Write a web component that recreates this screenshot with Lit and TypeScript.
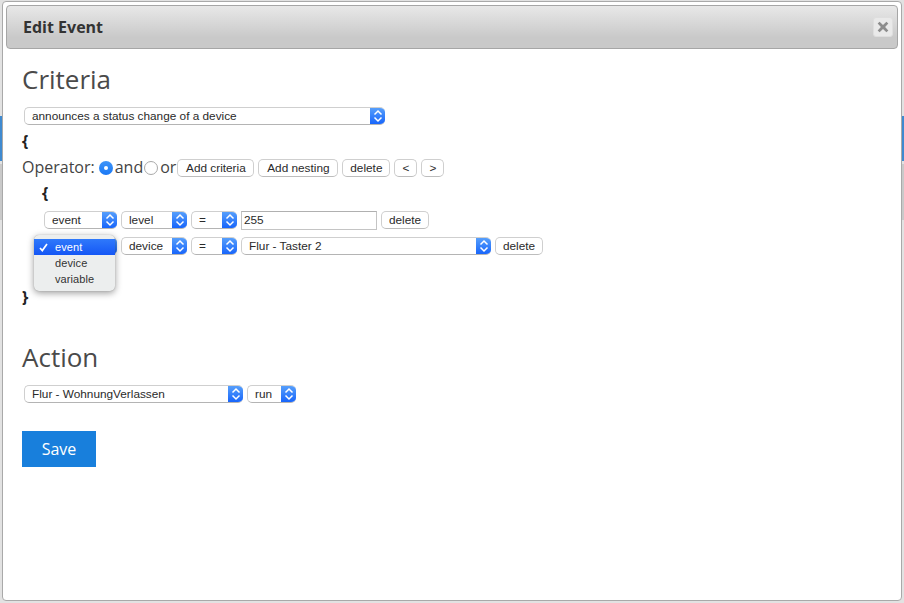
import { LitElement, html, css, svg } from "lit";
import { customElement } from "lit/decorators.js";

const chev = svg`<svg class="chev" width="10" height="14" viewBox="0 0 10 14" fill="none" stroke="#fff" stroke-width="1.5"><path d="M1.5 5.5 5 2 8.5 5.5"/><path d="M1.5 8.5 5 12 8.5 8.5"/></svg>`;

@customElement("app-root")
export class AppRoot extends LitElement {
  static styles = css`
    :host {
      display: block;
      box-sizing: border-box;
      height: 603px;
      padding: 1px 2px 2px 2px;
      overflow: hidden;
      background:
        linear-gradient(#3f8ad0, #3f8ad0) 0 116px / 100% 45px no-repeat,
        linear-gradient(#c9c9c9, #c9c9c9) 0 164px / 100% 56px no-repeat,
        #e2e2e2;
      font-family: "Open Sans", sans-serif;
      color: #444;
    }
    .dialog {
      box-sizing: border-box;
      height: 600px;
      background: #fff;
      border: 1px solid #a9a9a9;
      border-radius: 4px;
      padding: 3px;
      display: flex;
      flex-direction: column;
    }
    .header {
      box-sizing: border-box;
      height: 44px;
      border: 1px solid #a6a6a6;
      border-radius: 4px;
      background: linear-gradient(#e8e8e8, #c9c9c9 75%);
      display: flex;
      align-items: center;
      justify-content: space-between;
      padding: 0 4px 0 16px;
      flex: none;
    }
    .title { font-size: 16px; font-weight: 700; color: #333; }
    .close {
      width: 20px; height: 20px;
      border-radius: 3px;
      background: #e9e9e9;
      border: 1px solid #dedede;
      box-sizing: border-box;
      display: flex; align-items: center; justify-content: center;
    }
    .body { padding: 0 0 0 16px; display: flex; flex-direction: column; position: relative; }
    h2 { margin: 0; font-size: 26px; font-weight: 400; line-height: 36px; color: #4a4a4a; }
    .crit-h { margin-top: 12px; }
    .brace { font-size: 16px; font-weight: 700; line-height: 22px; color: #222; height: 22px; }
    .row { display: flex; align-items: center; gap: 4px; }
    .sel {
      box-sizing: border-box;
      height: 18px;
      display: flex;
      align-items: center;
      justify-content: space-between;
      background: #fff;
      border: 1px solid #cfcfcf;
      border-bottom-color: #b4b4b4;
      border-right: none;
      border-radius: 5px;
      font: 11.8px "Liberation Sans", Arial, sans-serif;
      color: #2a2a2a;
      padding-left: 7px;
      overflow: hidden;
    }
    .arrow {
      flex: none;
      width: 15px;
      height: 18px;
      margin-top: -1px;
      margin-bottom: -1px;
      background: linear-gradient(#5aa2fb, #1462fb);
      display: flex; align-items: center; justify-content: center;
    }
    .btn {
      box-sizing: border-box;
      height: 18px;
      display: flex; align-items: center; justify-content: center;
      background: #fff;
      border: 1px solid #cfcfcf;
      border-bottom-color: #bdbdbd;
      border-radius: 5px;
      font: 11.8px "Liberation Sans", Arial, sans-serif;
      color: #2a2a2a;
    }
    .w-add1 { width: 77px; }
    .w-add2 { width: 80px; }
    .w-del { width: 48px; }
    .w-nav { width: 23px; }
    .w-top { width: 361px; }
    .w-event { width: 73px; }
    .w-level { width: 66px; }
    .w-eq { width: 46px; }
    .w-dev { width: 250px; }
    .w-flur { width: 219px; }
    .w-run { width: 49px; }
    .op { height: 30px; display: flex; align-items: center; font-size: 16px; color: #444; }
    .op span { line-height: 22px; }
    .radio {
      box-sizing: border-box;
      width: 14px; height: 14px; border-radius: 50%;
      flex: none;
    }
    .radio.on { background: linear-gradient(#3f95f8, #1a78f5); margin: 2px 2px 0 4px; display: flex; align-items: center; justify-content: center; }
    .radio.on i { width: 4px; height: 4px; border-radius: 50%; background: #fff; display: block; }
    .radio.off { background: #fff; border: 1px solid #a9a9a9; margin: 2px 2px 0 1px; }
    .op .btn { margin-top: 2px; }
    .op .gap { margin-left: 4px; }
    .op .first { margin-left: 1px; }
    .top-sel { margin: 10px 0 0 2px; }
    .open { margin: 5px 0 0 0; height: 22px; }
    .nest { padding-left: 20px; }
    .nest .row { margin-left: 2px; height: 18px; }
    .input {
      box-sizing: border-box;
      width: 136px; height: 19px;
      border: 1px solid #c4c4c4;
      border-top-color: #b0b0b0;
      background: #fff;
      font: 11.8px "Liberation Sans", Arial, sans-serif;
      color: #2a2a2a;
      padding-left: 2px;
      display: flex; align-items: center;
    }
    .r1 { margin-top: 7px; }
    .r2 { margin-top: 8px; }
    .nest .close-b { margin-top: 5px; }
    .popup {
      position: absolute;
      left: 28px;
      top: 186px;
      width: 81px;
      height: 56px;
      box-sizing: border-box;
      padding: 4px 0;
      border-radius: 5px;
      background: #eceeee;
      box-shadow: 0 2px 7px rgba(0,0,0,.4), 0 0 1px rgba(0,0,0,.3);
      font: 11px "Liberation Sans", Arial, sans-serif;
      color: #333;
      z-index: 2;
    }
    .item { height: 16px; line-height: 16px; padding-left: 21px; position: relative; letter-spacing: .1px; }
    .item.sel-item { background: linear-gradient(#2f79fb, #1557f5); color: #fff; }
    .check { position: absolute; left: 5px; top: 4px; }
    .end { margin-top: 4px; }
    .act-h { margin-top: 31px; }
    .act-row { margin: 10px 0 0 2px; }
    .save {
      margin-top: 28px;
      box-sizing: border-box;
      width: 74px; height: 36px;
      background: #187fdc;
      color: #fff;
      font-size: 16px;
      display: flex; align-items: center; justify-content: center;
    }
  `;

  private sel(label: string, w: string) {
    return html`<div class="sel ${w}"><span>${label}</span><div class="arrow">${chev}</div></div>`;
  }

  render() {
    return html`<div class="dialog">
      <div class="header">
        <div class="title">Edit Event</div>
        <div class="close"><svg width="12" height="12" viewBox="0 0 11 11"><path d="M2.4.6 5.5 3.6 8.6.6l1.8 1.8-3 3.1 3 3.1-1.8 1.8-3.1-3-3.1 3L.6 8.6l3-3.1-3-3.1z" fill="#8c8c8c"/></svg></div>
      </div>
      <div class="body">
        <h2 class="crit-h">Criteria</h2>
        <div class="top-sel">${this.sel("announces a status change of a device", "w-top")}</div>
        <div class="brace open">{</div>
        <div class="op">
          <span>Operator:</span>
          <div class="radio on"><i></i></div><span>and</span>
          <div class="radio off"></div><span>or</span>
          <div class="btn w-add1 first">Add criteria</div>
          <div class="btn w-add2 gap">Add nesting</div>
          <div class="btn w-del gap">delete</div>
          <div class="btn w-nav gap">&lt;</div>
          <div class="btn w-nav gap">&gt;</div>
        </div>
        <div class="nest">
          <div class="brace">{</div>
          <div class="row r1">
            ${this.sel("event", "w-event")}${this.sel("level", "w-level")}${this.sel("=", "w-eq")}
            <div class="input">255</div>
            <div class="btn w-del">delete</div>
          </div>
          <div class="row r2">
            ${this.sel("", "w-event")}${this.sel("device", "w-level")}${this.sel("=", "w-eq")}${this.sel("Flur - Taster 2", "w-dev")}
            <div class="btn w-del">delete</div>
          </div>
          <div class="brace close-b"></div>
        </div>
        <div class="brace end">}</div>
        <h2 class="act-h">Action</h2>
        <div class="row act-row">${this.sel("Flur - WohnungVerlassen", "w-flur")}${this.sel("run", "w-run")}</div>
        <div class="save">Save</div>
        <div class="popup">
          <div class="item sel-item"><svg class="check" width="9" height="9" viewBox="0 0 9 9" fill="none" stroke="#fff" stroke-width="1.7"><path d="M1 5 3.3 7.6 8 1"/></svg>event</div>
          <div class="item">device</div>
          <div class="item">variable</div>
        </div>
      </div>
    </div>`;
  }
}
